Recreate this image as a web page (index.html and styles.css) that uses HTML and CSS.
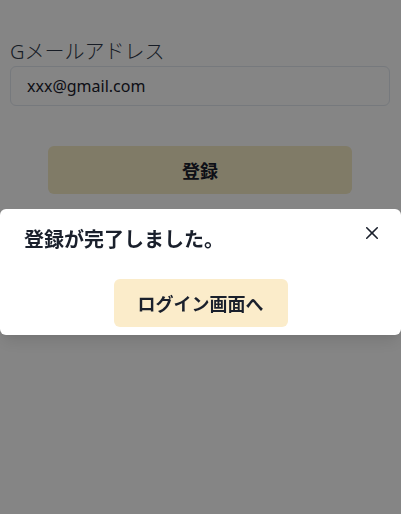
FILE: index.html
```html
<!DOCTYPE html>
<html lang="ja">
<head>
<meta charset="utf-8">
<link rel="stylesheet" href="styles.css">
</head>
<body>
<main class="page">
  <form class="form">
    <label class="label" for="email">Gメールアドレス</label>
    <input class="input" id="email" type="text" value="xxx@gmail.com">
    <button class="submit" type="button">登録</button>
  </form>
</main>
<div class="overlay"></div>
<section class="modal" role="dialog">
  <header class="modal-header">登録が完了しました。</header>
  <button class="close" type="button" aria-label="閉じる">
    <svg viewBox="0 0 24 24" width="12" height="12"><path fill="currentColor" d="M.439,21.44a1.5,1.5,0,0,0,2.122,2.121L11.823,14.3a.25.25,0,0,1,.354,0l9.262,9.263a1.5,1.5,0,1,0,2.122-2.121L14.3,12.177a.25.25,0,0,1,0-.354l9.263-9.262A1.5,1.5,0,0,0,21.439.44L12.177,9.7a.25.25,0,0,1-.354,0L2.561.44A1.5,1.5,0,0,0,.439,2.561L9.7,11.823a.25.25,0,0,1,0,.354Z"/></svg>
  </button>
  <footer class="modal-footer">
    <button class="action" type="button">ログイン画面へ</button>
  </footer>
</section>
</body>
</html>
```
FILE: styles.css
```css
* { box-sizing: border-box; }
html, body {
  margin: 0;
  padding: 0;
  background: #fff;
  width: 401px;
  height: 514px;
  overflow: hidden;
  font-family: "Noto Sans", "Noto Sans CJK JP", sans-serif;
  color: #1a202c;
}
.page {
  padding: 40px 10px 0 11px;
}
.form {
  display: flex;
  flex-direction: column;
}
.label {
  font-size: 20px;
  line-height: 24px;
  font-weight: 300;
  color: #2d3748;
  margin-bottom: 2px;
  margin-left: -1px;
}
.input {
  height: 40px;
  width: 380px;
  margin-left: -1px;
  padding: 0 16px;
  border: 1px solid #e2e8f0;
  border-radius: 6px;
  font-family: inherit;
  font-size: 16px;
  color: #1a202c;
  background: #fff;
  outline: none;
}
.submit {
  align-self: flex-start;
  margin: 40px 0 0 37px;
  width: 304px;
  height: 48px;
  border: none;
  border-radius: 6px;
  background: #f5ebc5;
  font-family: inherit;
  font-size: 18px;
  font-weight: 700;
  color: #1a202c;
}
.overlay {
  position: fixed;
  inset: 0;
  background: rgba(0, 0, 0, 0.48);
}
.modal {
  position: fixed;
  top: 209px;
  left: 0;
  width: 401px;
  background: #fff;
  border-radius: 6px;
  box-shadow: 0 10px 15px -3px rgba(0,0,0,0.1), 0 4px 6px -2px rgba(0,0,0,0.05);
}
.modal-header {
  padding: 16px 24px;
  font-size: 20px;
  line-height: 30px;
  font-weight: 700;
  color: #1a202c;
}
.close {
  position: absolute;
  top: 8px;
  right: 13px;
  width: 32px;
  height: 32px;
  border: none;
  background: transparent;
  display: flex;
  align-items: center;
  justify-content: center;
  color: #1a202c;
  padding: 0;
  border-radius: 6px;
}
.modal-footer {
  display: flex;
  justify-content: center;
  padding: 8px 24px 8px;
}
.action {
  height: 48px;
  padding: 0 24px;
  border: none;
  border-radius: 6px;
  background: #fbecca;
  font-family: inherit;
  font-size: 18px;
  font-weight: 700;
  color: #1a202c;
}
```
